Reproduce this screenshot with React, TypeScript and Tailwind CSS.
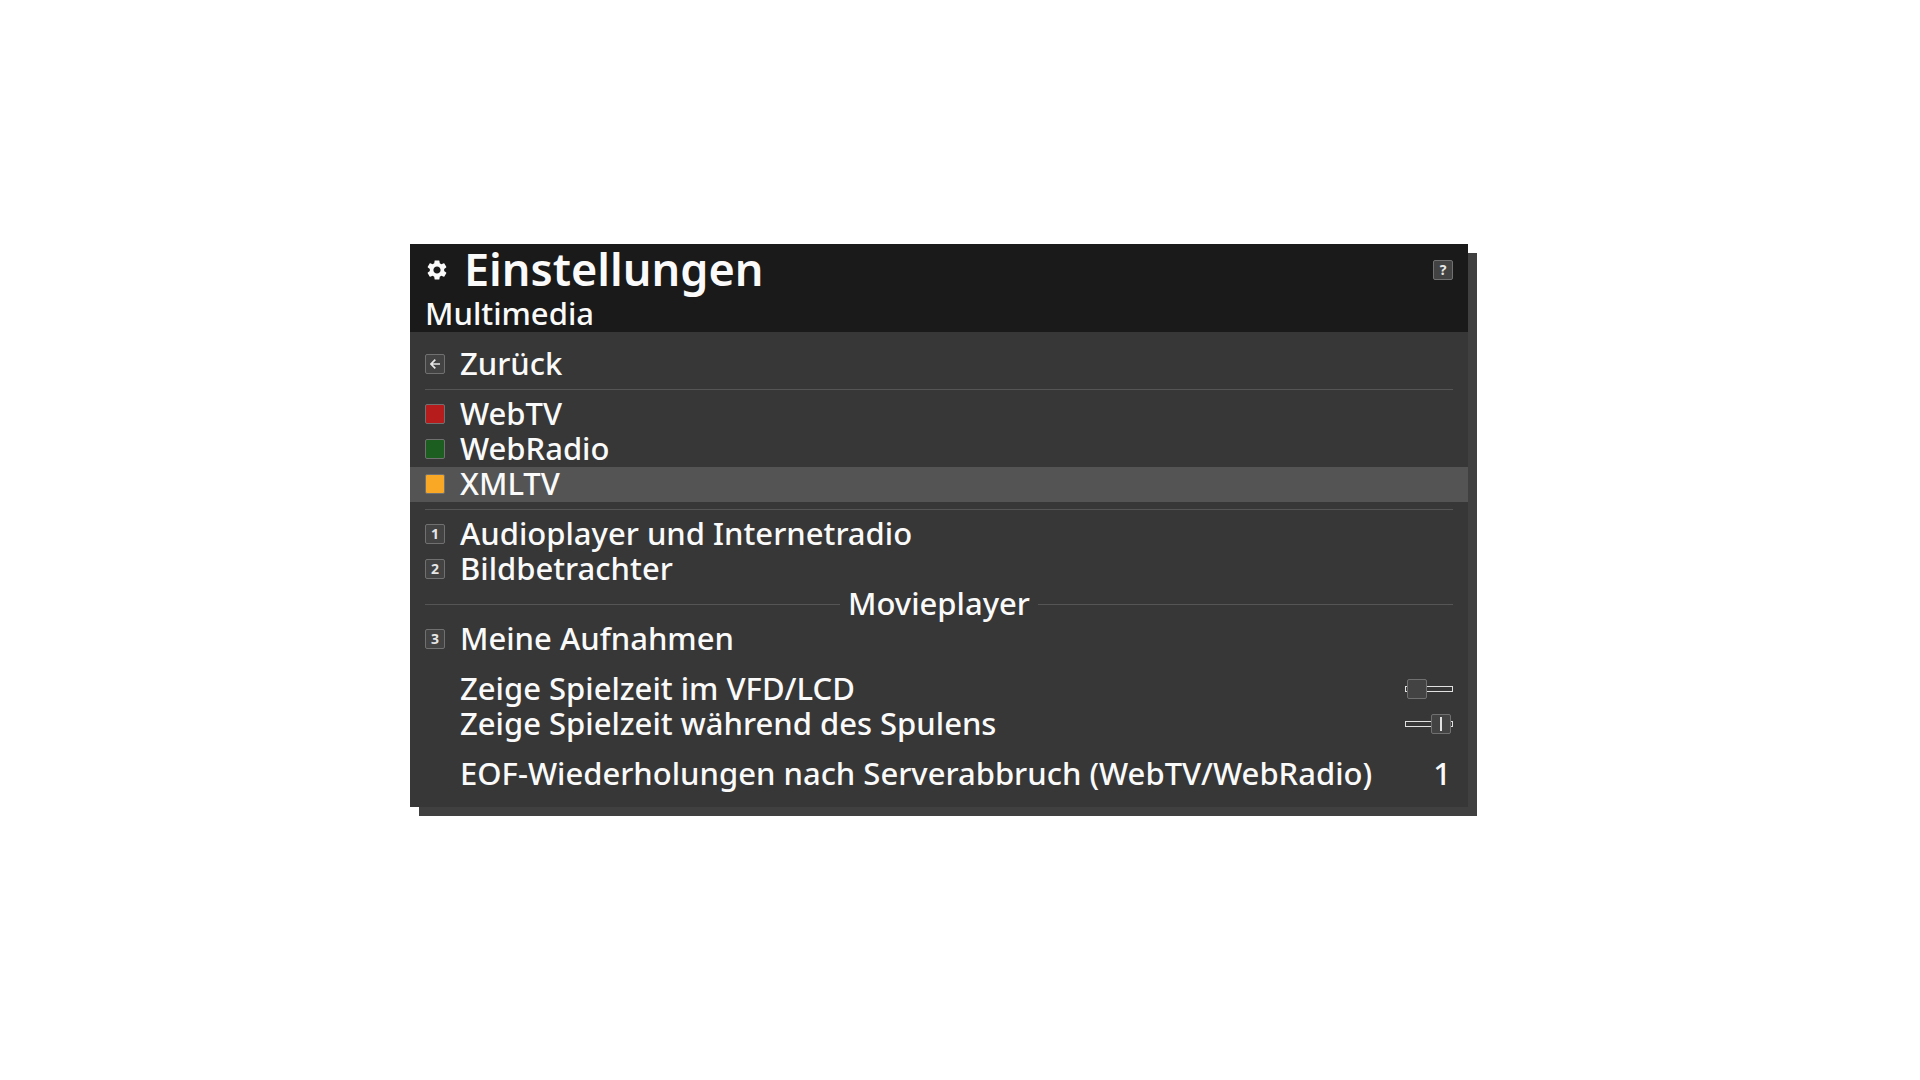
import { useState } from "react";
import type { ReactNode } from "react";
import { MdSettings } from "react-icons/md";

const swatches = {
  red: "bg-[#b71c1c]",
  green: "bg-[#1b5e20]",
  yellow: "bg-[#f9a825]",
  plain: "bg-[#434343]",
};

function Key({ tone = "plain", children }: { tone?: keyof typeof swatches; children?: ReactNode }) {
  return (
    <span
      aria-hidden="true"
      className={`flex size-5 shrink-0 items-center justify-center self-center rounded-[2px] border border-[#707070] text-[14px] leading-none font-bold text-[#e6e6e6] ${swatches[tone]}`}
    >
      {children}
    </span>
  );
}

function BackArrow() {
  return (
    <svg width="10" height="10" viewBox="0 0 10 10" fill="none" stroke="currentColor" strokeWidth="1.7">
      <path d="M5.3 0.6 1 5l4.3 4.4M1 5h9" />
    </svg>
  );
}

function Item({
  icon,
  selected = false,
  onSelect,
  children,
}: {
  icon: ReactNode;
  selected?: boolean;
  onSelect: () => void;
  children: string;
}) {
  return (
    <button
      type="button"
      onClick={onSelect}
      className={`flex min-h-[35px] w-full items-start gap-[15px] px-[15px] pb-px text-left outline-none ${selected ? "bg-[#545454]" : ""}`}
    >
      {icon}
      <span>{children}</span>
    </button>
  );
}

function Divider({ label }: { label?: string }) {
  if (!label) {
    return (
      <div className="flex h-[15px] items-center px-[15px]">
        <hr className="w-full border-[#555555]" />
      </div>
    );
  }
  return (
    <div className="flex min-h-[35px] items-start gap-2 px-[15px]">
      <hr className="flex-1 self-center border-[#555555]" />
      <h3>{label}</h3>
      <hr className="flex-1 self-center border-[#555555]" />
    </div>
  );
}

function Toggle({ label, initial }: { label: string; initial: boolean }) {
  const [on, setOn] = useState(initial);
  return (
    <label className="flex min-h-[35px] items-start justify-between gap-4 pr-[15px] pb-px pl-[50px]">
      <span>{label}</span>
      <span className={`grid w-12 shrink-0 items-center self-center ${on ? "justify-items-end" : "justify-items-start"}`}>
        <input
          type="checkbox"
          role="switch"
          checked={on}
          onChange={(e) => setOn(e.target.checked)}
          className="col-start-1 row-start-1 h-1.5 w-full appearance-none border border-[#e0e0e0] outline-none"
        />
        <span className="z-10 col-start-1 row-start-1 mx-0.5 flex size-5 items-center justify-center rounded-[2px] border border-[#707070] bg-[#434343]">
          {on && <span className="h-3.5 w-0.5 bg-[#e0e0e0]" />}
        </span>
      </span>
    </label>
  );
}

export default function App() {
  const [selected, setSelected] = useState("XMLTV");
  const [retries, setRetries] = useState("1");
  const item = (name: string, icon: ReactNode) => (
    <Item icon={icon} selected={selected === name} onSelect={() => setSelected(name)}>
      {name}
    </Item>
  );

  return (
    <main className="flex min-h-screen items-center justify-center bg-white pr-[42px] pb-[29px] font-['Noto_Sans',sans-serif] text-[31px] leading-[33px] font-medium text-[#fafafa]">
      <section className="w-full max-w-[1058px] bg-[#373737] shadow-[9px_9px_0_#404040]">
        <header className="bg-[#1a1a1a] px-[15px]">
          <div className="flex min-h-[53px] items-start gap-[15px] pb-px">
            <MdSettings size={24} className="shrink-0 self-center" aria-hidden="true" />
            <h1 className="flex-1 text-[45px] leading-[49px] font-semibold">Einstellungen</h1>
            <button type="button" aria-label="Hilfe" className="flex self-center">
              <Key>?</Key>
            </button>
          </div>
          <h2 className="min-h-[35px]">Multimedia</h2>
        </header>

        <div className="py-[15px]">
          {item("Zurück", <Key><BackArrow /></Key>)}
          <Divider />
          {item("WebTV", <Key tone="red" />)}
          {item("WebRadio", <Key tone="green" />)}
          {item("XMLTV", <Key tone="yellow" />)}
          <Divider />
          {item("Audioplayer und Internetradio", <Key>1</Key>)}
          {item("Bildbetrachter", <Key>2</Key>)}
          <Divider label="Movieplayer" />
          {item("Meine Aufnahmen", <Key>3</Key>)}
          <div className="mt-[15px]">
            <Toggle label="Zeige Spielzeit im VFD/LCD" initial={false} />
            <Toggle label="Zeige Spielzeit während des Spulens" initial={true} />
          </div>
          <label className="mt-[15px] flex min-h-[35px] items-start justify-between pr-[15px] pl-[50px]">
            <span>EOF-Wiederholungen nach Serverabbruch (WebTV/WebRadio)</span>
            <input
              type="text"
              inputMode="numeric"
              value={retries}
              onChange={(e) => setRetries(e.target.value)}
              className="h-[33px] w-12 bg-transparent pr-0.5 text-right outline-none"
            />
          </label>
        </div>
      </section>
    </main>
  );
}
